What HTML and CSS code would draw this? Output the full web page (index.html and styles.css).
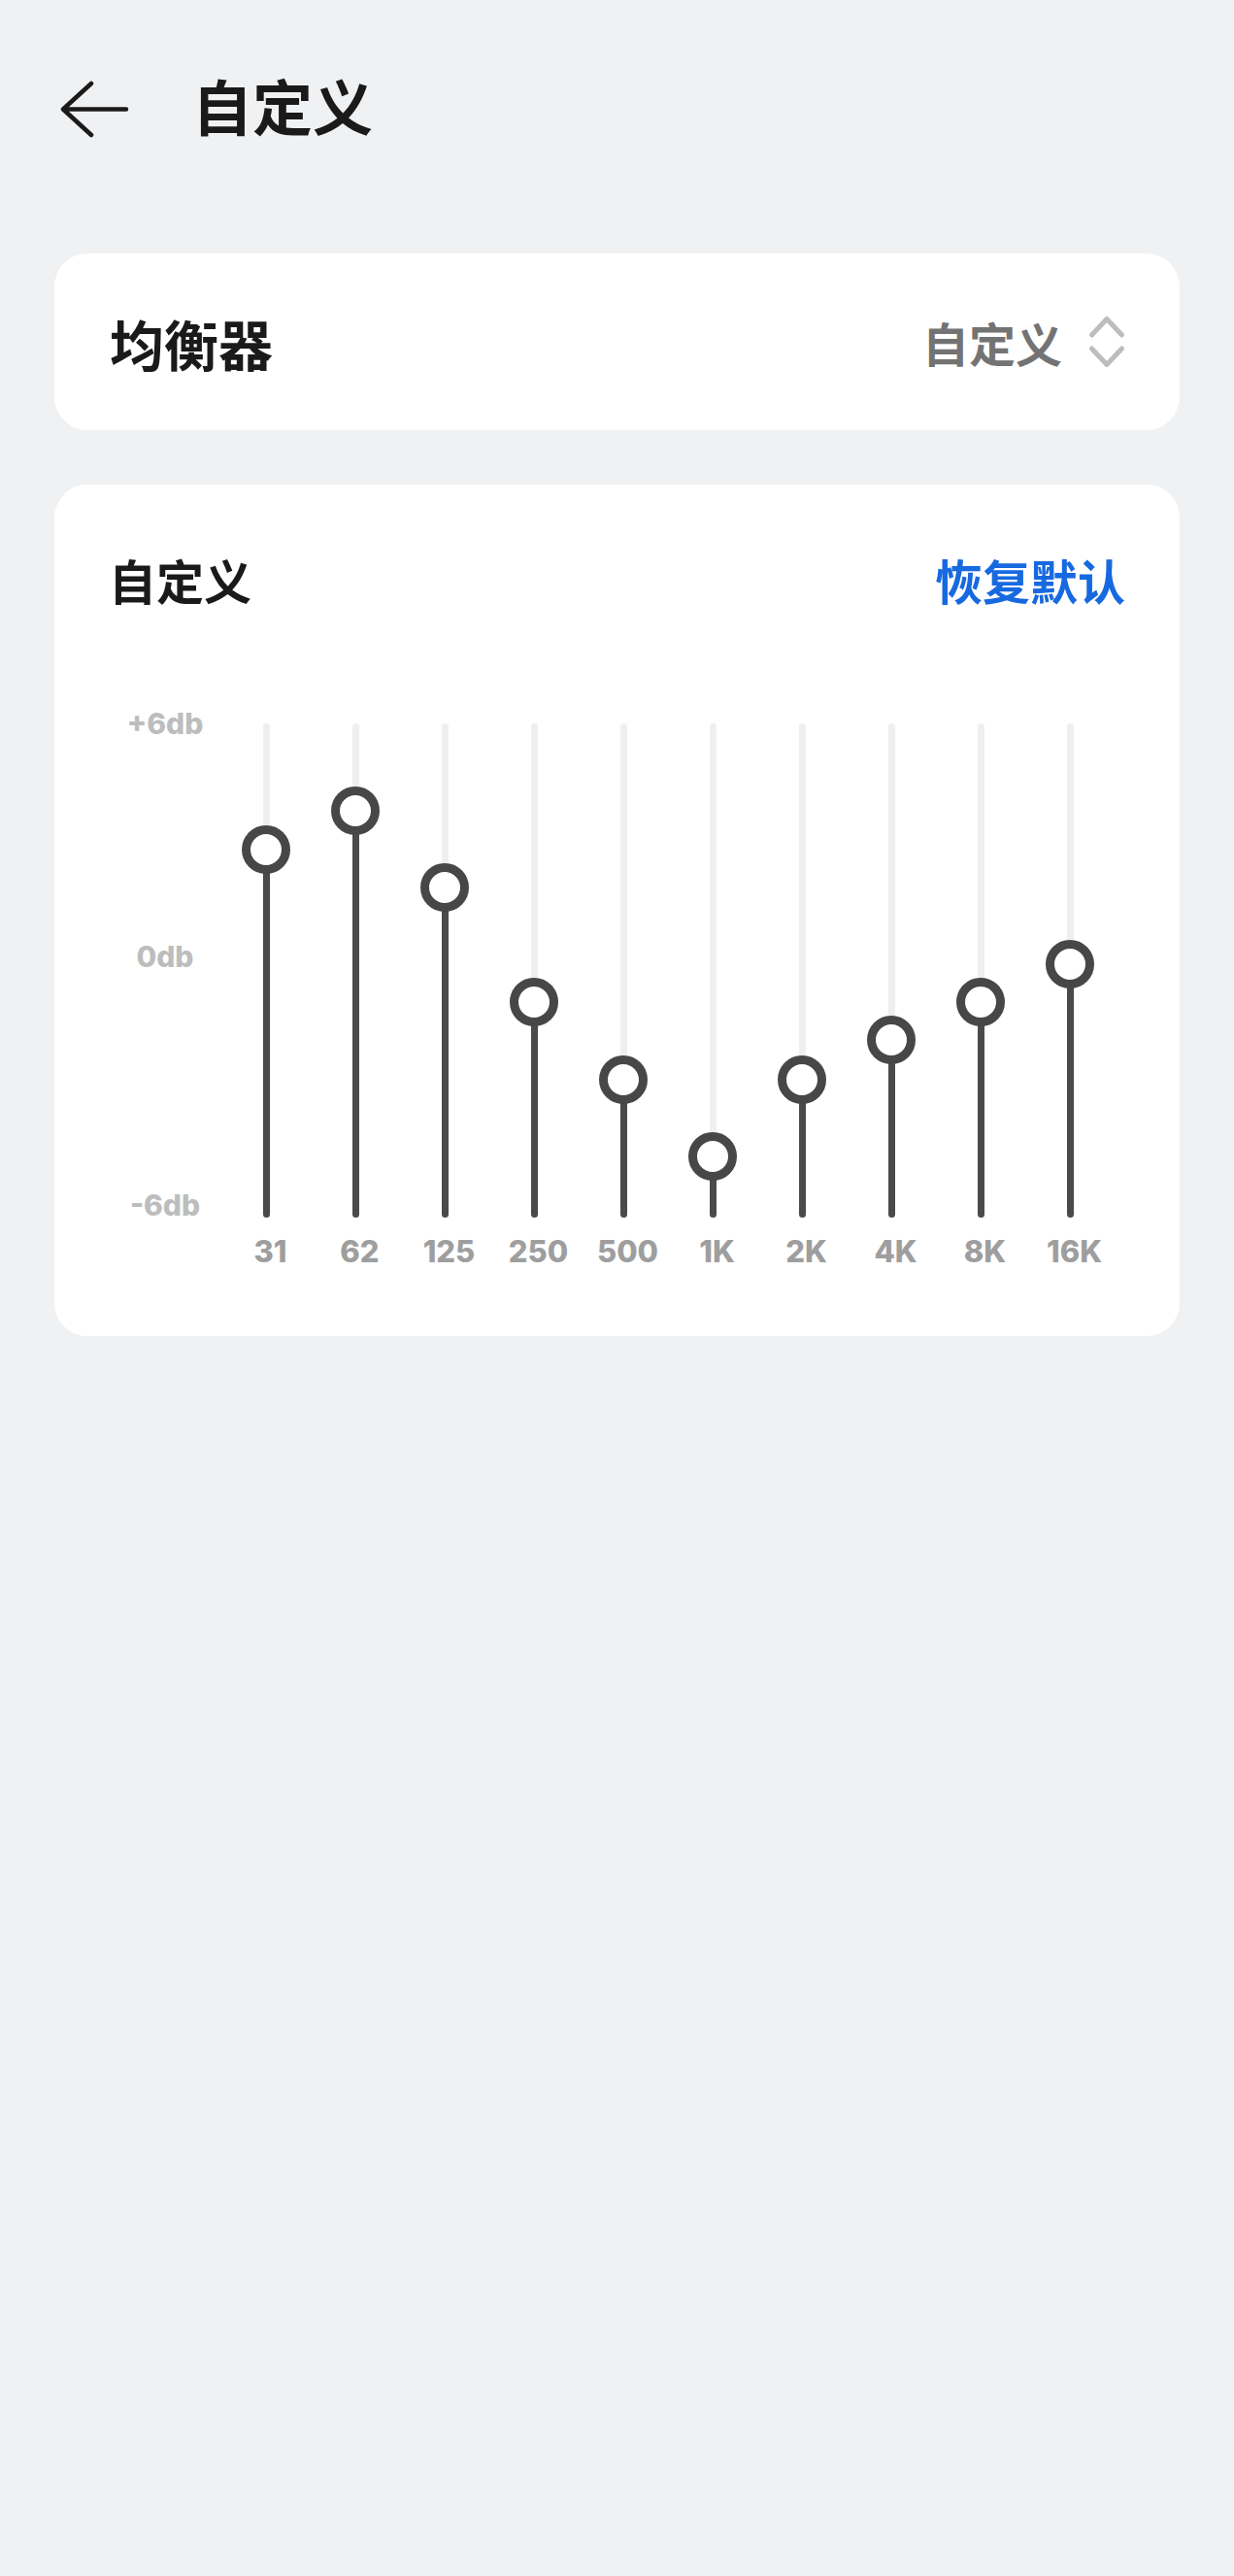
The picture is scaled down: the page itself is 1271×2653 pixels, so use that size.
FILE: index.html
```html
<!DOCTYPE html>
<html lang="zh-CN">
<head>
    <meta charset="UTF-8">
    <meta name="viewport" content="width=device-width, initial-scale=1.0">
    <title>自定义</title>
    <link rel="stylesheet" href="styles.css">
</head>
<body>

    <div class="page">
        <header class="topbar">
            <svg class="back" width="72" height="60" viewBox="0 0 72 60">
                <path d="M69 29.5H4M33 3L4 29.5L33 56" fill="none" stroke="#1a1a1a" stroke-width="4.5" stroke-linecap="round" stroke-linejoin="round"/>
            </svg>
            <h1>自定义</h1>
        </header>

        <section class="card eq-row">
            <span class="row-title">均衡器</span>
            <span class="row-value">
                自定义
                <svg class="updown" width="40" height="56" viewBox="0 0 40 56">
                    <path d="M4.5 21L20 4.5L35.5 21M4.5 35L20 51.5L35.5 35" fill="none" stroke="#bdbdbd" stroke-width="5" stroke-linecap="round" stroke-linejoin="round"/>
                </svg>
            </span>
        </section>

        <section class="card custom">
            <div class="custom-head">
                <h2>自定义</h2>
                <a class="reset">恢复默认</a>
            </div>

            <div class="chart">
                <div class="axis">
                    <span>+6db</span>
                    <span class="zero">0db</span>
                    <span>-6db</span>
                </div>

                <div class="band">
                    <div class="track"><div class="fill" style="height:379px"></div><div class="knob" style="top:130px"></div></div>
                    <span class="freq">31</span>
                </div>
                <div class="band">
                    <div class="track"><div class="fill" style="height:419px"></div><div class="knob" style="top:90px"></div></div>
                    <span class="freq">62</span>
                </div>
                <div class="band">
                    <div class="track"><div class="fill" style="height:340px"></div><div class="knob" style="top:169px"></div></div>
                    <span class="freq">125</span>
                </div>
                <div class="band">
                    <div class="track"><div class="fill" style="height:222px"></div><div class="knob" style="top:287px"></div></div>
                    <span class="freq">250</span>
                </div>
                <div class="band">
                    <div class="track"><div class="fill" style="height:142px"></div><div class="knob" style="top:367px"></div></div>
                    <span class="freq">500</span>
                </div>
                <div class="band">
                    <div class="track"><div class="fill" style="height:63px"></div><div class="knob" style="top:446px"></div></div>
                    <span class="freq">1K</span>
                </div>
                <div class="band">
                    <div class="track"><div class="fill" style="height:142px"></div><div class="knob" style="top:367px"></div></div>
                    <span class="freq">2K</span>
                </div>
                <div class="band">
                    <div class="track"><div class="fill" style="height:183px"></div><div class="knob" style="top:326px"></div></div>
                    <span class="freq">4K</span>
                </div>
                <div class="band">
                    <div class="track"><div class="fill" style="height:222px"></div><div class="knob" style="top:287px"></div></div>
                    <span class="freq">8K</span>
                </div>
                <div class="band">
                    <div class="track"><div class="fill" style="height:261px"></div><div class="knob" style="top:248px"></div></div>
                    <span class="freq">16K</span>
                </div>
            </div>
        </section>
    </div>

</body>
</html>
```

FILE: styles.css
```css
body {
    margin: 0;
    background-color: #f0f1f3;
    font-family: Inter, "Noto Sans CJK SC", sans-serif;
    color: #1a1a1a;
}
.page {
    padding: 0 56px;
}
.topbar {
    height: 226px;
    display: flex;
    align-items: center;
    padding-left: 5px;
}
.topbar h1 {
    margin: 0 0 0 65px;
    font-size: 62px;
    font-weight: 700;
    line-height: 1;
}
.back {
    display: block;
}
.card {
    background: #ffffff;
    border-radius: 34px;
}
.eq-row {
    margin-top: 35px;
    height: 182px;
    display: flex;
    align-items: center;
    justify-content: space-between;
    padding: 0 55px 0 57px;
}
.row-title {
    font-size: 56px;
    font-weight: 700;
}
.row-value {
    display: flex;
    align-items: center;
    gap: 26px;
    font-size: 48px;
    font-weight: 700;
    color: #737373;
}
.updown {
    display: block;
}
.custom {
    margin-top: 56px;
    padding: 70px 56px 69px 56px;
}
.custom-head {
    display: flex;
    align-items: center;
    justify-content: space-between;
    height: 54px;
}
.custom-head h2 {
    margin: 0;
    font-size: 49px;
    font-weight: 700;
}
.reset {
    font-size: 49px;
    font-weight: 700;
    color: #1769e0;
    cursor: pointer;
}
.chart {
    display: flex;
    align-items: flex-start;
    margin-top: 122px;
}
.axis {
    width: 116px;
    height: 532px;
    margin-top: -18px;
    display: flex;
    flex-direction: column;
    justify-content: space-between;
    align-items: center;
}
.axis span {
    font-size: 30px;
    font-weight: 800;
    line-height: 36px;
    color: #bdbdbd;
}
.axis .zero {
    margin-bottom: 16px;
}
.band {
    width: 92px;
    display: flex;
    flex-direction: column;
    align-items: center;
}
.track {
    position: relative;
    width: 7px;
    height: 509px;
    background: #efefef;
    border-radius: 4px;
}
.fill {
    position: absolute;
    left: 0;
    right: 0;
    bottom: 0;
    background: #4a4a4a;
    border-radius: 4px;
}
.knob {
    position: absolute;
    left: 50%;
    width: 32px;
    height: 32px;
    margin: -25px 0 0 -25px;
    border: 9px solid #474747;
    border-radius: 50%;
    background: #ffffff;
}
.freq {
    margin-top: 17px;
    padding-left: 9px;
    font-size: 31px;
    font-weight: 800;
    line-height: 36px;
    color: #9e9e9e;
}
```
